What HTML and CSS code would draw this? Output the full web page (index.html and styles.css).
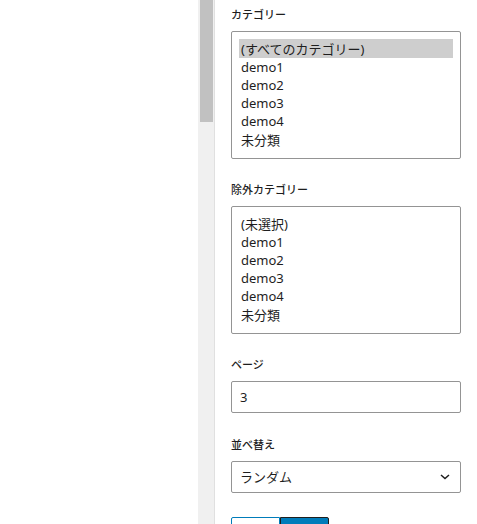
FILE: index.html
```html
<!DOCTYPE html>
<html lang="ja">
<head>
  <meta charset="UTF-8">
  <meta name="viewport" content="width=device-width, initial-scale=1.0">
  <title>投稿一覧ブロック設定</title>
  <link rel="stylesheet" href="styles.css">
</head>
<body>
  <div class="editor">
    <div class="canvas"></div>

    <div class="scrollbar">
      <div class="scrollbar-thumb"></div>
    </div>

    <aside class="sidebar">
      <div class="field">
        <label class="field-label" for="category">カテゴリー</label>
        <select id="category" class="listbox" multiple>
          <option selected>(すべてのカテゴリー)</option>
          <option>demo1</option>
          <option>demo2</option>
          <option>demo3</option>
          <option>demo4</option>
          <option>未分類</option>
        </select>
      </div>

      <div class="field">
        <label class="field-label" for="excludeCategory">除外カテゴリー</label>
        <select id="excludeCategory" class="listbox" multiple>
          <option>(未選択)</option>
          <option>demo1</option>
          <option>demo2</option>
          <option>demo3</option>
          <option>demo4</option>
          <option>未分類</option>
        </select>
      </div>

      <div class="field">
        <label class="field-label" for="page">ページ</label>
        <input type="number" id="page" class="text-input" value="3">
      </div>

      <div class="field field-order">
        <label class="field-label" for="orderby">並べ替え</label>
        <div class="select-wrap">
          <select id="orderby" class="select">
            <option>ランダム</option>
            <option>新しい順</option>
            <option>古い順</option>
          </select>
          <svg class="select-arrow" width="10" height="6" viewBox="0 0 10 6">
            <path d="M1 1l4 3.5L9 1" fill="none" stroke="#1e1e1e" stroke-width="1.5"/>
          </svg>
        </div>
      </div>

      <!-- 昇順 / 降順 の切り替え -->
      <div class="button-group">
        <button class="toggle" aria-label="昇順">
          <svg width="16" height="16" viewBox="0 0 16 16"><path d="M8 13V3M4 7l4-4 4 4" fill="none" stroke="currentColor" stroke-width="1.5"/></svg>
        </button>
        <button class="toggle is-pressed" aria-label="降順">
          <svg width="16" height="16" viewBox="0 0 16 16"><path d="M8 3v10M4 9l4 4 4-4" fill="none" stroke="currentColor" stroke-width="1.5"/></svg>
        </button>
      </div>
    </aside>
  </div>
</body>
</html>
```

FILE: styles.css
```css
html, body {
  height: 100%;
}

body {
  margin: 0;
  font-family: "Noto Sans", "Noto Sans CJK JP", sans-serif;
  color: #1e1e1e;
  background-color: #fff;
  overflow: hidden;
}

.editor {
  display: flex;
  height: 100%;
}

.canvas {
  flex: 1;
  background-color: #fff;
}

.scrollbar {
  flex: none;
  width: 16px;
  background-color: #f0f0f0;
  padding: 0 1px 0 2px;
  box-sizing: border-box;
}

.scrollbar-thumb {
  height: 122px;
  background-color: #c1c1c1;
}

.sidebar {
  flex: none;
  box-sizing: border-box;
  width: 263px;
  border-left: 1px solid #e0e0e0;
  padding: 7px 16px 0;
  display: flex;
  flex-direction: column;
  gap: 23px;
}

.field {
  display: flex;
  flex-direction: column;
}

.field-order {
  margin-top: 1px;
}

.field-label {
  height: 16px;
  font-size: 11px;
  font-weight: 500;
  line-height: 16px;
  margin-bottom: 8px;
}

.listbox {
  height: 128px;
  padding: 7px;
  border: 1px solid #949494;
  border-radius: 2px;
  font-family: inherit;
  font-size: 13px;
  color: #1e1e1e;
  background-color: #fff;
  overflow: hidden;
  outline: none;
}

.listbox option {
  padding: 0 2px;
  line-height: 18px;
  min-height: 18px;
}

.listbox option:checked {
  background: #cecece;
  color: #1e1e1e;
}

.text-input,
.select {
  height: 32px;
  box-sizing: border-box;
  border: 1px solid #949494;
  border-radius: 2px;
  padding: 0 8px;
  font-family: inherit;
  font-size: 13px;
  color: #1e1e1e;
  background-color: #fff;
  width: 100%;
}

.text-input {
  appearance: textfield;
}

.text-input::-webkit-inner-spin-button {
  appearance: none;
}

.select-wrap {
  position: relative;
}

.select {
  appearance: none;
  padding-right: 26px;
}

.select-arrow {
  position: absolute;
  right: 11px;
  top: 13px;
  pointer-events: none;
}

.button-group {
  display: flex;
  flex: none;
  margin-top: 1px;
}

.toggle {
  flex: none;
  width: 49px;
  height: 36px;
  padding: 0;
  display: flex;
  align-items: center;
  justify-content: center;
  border: 1px solid #007cba;
  background-color: #fff;
  color: #007cba;
  border-radius: 2px 0 0 2px;
}

.toggle.is-pressed {
  background-color: #007cba;
  border-color: #1e1e1e;
  color: #fff;
  border-radius: 0 2px 2px 0;
}
```
